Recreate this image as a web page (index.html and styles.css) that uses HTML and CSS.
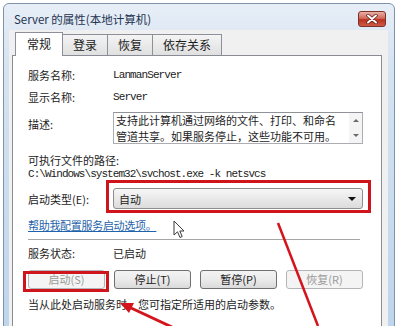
FILE: index.html
```html
<!DOCTYPE html>
<html lang="zh-CN">
  <head>
    <meta charset="UTF-8" />
    <title>Server 的属性(本地计算机)</title>
    <link rel="stylesheet" href="styles.css">
  </head>
  <body>
    <div class="window">
      <div class="titlebar">
        <span class="title">Server 的属性(本地计算机)</span>
        <div class="close">
          <svg width="14" height="10" viewBox="0 0 14 10">
            <path d="M3 1.5 L11 8.5 M11 1.5 L3 8.5" stroke="#5a1a12" stroke-width="3.4" stroke-linecap="round" />
            <path d="M3 1.5 L11 8.5 M11 1.5 L3 8.5" stroke="#fff" stroke-width="2" stroke-linecap="round" />
          </svg>
        </div>
      </div>
      <div class="client">
        <div class="tabs">
          <div class="tab active">常规</div>
          <div class="tab">登录</div>
          <div class="tab">恢复</div>
          <div class="tab">依存关系</div>
        </div>
        <div class="panel">
          <div class="row">
            <span class="label">服务名称:</span>
            <span class="mono">LanmanServer</span>
          </div>
          <div class="row">
            <span class="label">显示名称:</span>
            <span class="mono">Server</span>
          </div>
          <div class="row desc-row">
            <span class="label desc-label">描述:</span>
            <div class="desc-box">
              <div class="desc-text">
                <div>支持此计算机通过网络的文件、打印、和命名</div>
                <div>管道共享。如果服务停止，这些功能不可用。</div>
              </div>
              <div class="scroll">
                <span class="tri-up"></span>
                <span class="tri-down"></span>
              </div>
            </div>
          </div>
          <div class="line path-label">可执行文件的路径:</div>
          <div class="line mono path">C:\Windows\system32\svchost.exe -k netsvcs</div>
          <div class="row select-row">
            <span class="label">启动类型(E):</span>
            <div class="select">
              <span>自动</span>
              <span class="tri-down dark"></span>
            </div>
          </div>
          <div class="line link">帮助我配置服务启动选项。</div>
          <div class="sep"></div>
          <div class="line status">
            <span class="label">服务状态:</span>
            <span>已启动</span>
          </div>
          <div class="buttons">
            <div class="btn disabled">启动(S)</div>
            <div class="btn">停止(T)</div>
            <div class="btn">暂停(P)</div>
            <div class="btn disabled">恢复(R)</div>
          </div>
          <div class="line note">当从此处启动服务时，您可指定所适用的启动参数。</div>
        </div>
      </div>
    </div>

    <div class="mark mark-select"></div>
    <div class="mark mark-start"></div>

    <svg class="arrows" width="400" height="326" viewBox="0 0 400 326">
      <line x1="278" y1="223" x2="318" y2="326" stroke="#d4141c" stroke-width="2.5" />
      <line x1="130" y1="307.5" x2="172" y2="327" stroke="#d4141c" stroke-width="3" />
      <polygon points="120,303 134,303 129,313" fill="#d4141c" />
    </svg>

    <svg class="cursor" width="13" height="20" viewBox="0 0 13 20">
      <path d="M1 1 L1 15 L4.5 11.8 L7 17.5 L9.2 16.5 L6.8 11 L11 11 Z" fill="#fff" stroke="#3a3a3a" stroke-width="1" stroke-linejoin="round" />
    </svg>
  </body>
</html>
```

FILE: styles.css
```css
body {
  margin: 0;
  width: 400px;
  height: 326px;
  overflow: hidden;
  position: relative;
  background: #fff;
  font-family: "Noto Sans CJK SC", sans-serif;
  font-size: 11px;
  color: #1c1c1c;
}

.window {
  margin: 3px 0 0 3px;
  width: 390px;
  height: 340px;
  border: 1px solid #7f93ab;
  border-radius: 6px 6px 0 0;
  background: linear-gradient(#e7eef7, #d6e3f1 60px, #bdd4ec);
}

.titlebar {
  height: 26px;
  box-sizing: border-box;
  display: flex;
  align-items: flex-start;
  justify-content: space-between;
  padding: 7px 8px 0 10px;
}
.title {
  font-size: 11.5px;
  line-height: 16px;
  color: #1e3350;
}
.close {
  width: 26px;
  height: 14px;
  border: 1px solid #7a3328;
  border-radius: 3px;
  background: linear-gradient(#eab0a6, #d36a5a 45%, #b9321f 55%, #cf5a45);
  display: flex;
  align-items: center;
  justify-content: center;
}

.client {
  margin: 0 6px 0 5px;
  height: 310px;
  padding: 0 6px 0 3px;
  background: #f0f0f0;
}

.tabs {
  height: 25px;
  display: flex;
  align-items: flex-end;
  padding-left: 3px;
}
.tab {
  height: 20px;
  line-height: 20px;
  padding: 0 10px;
  margin-right: -1px;
  border: 1px solid #8e9099;
  border-bottom: none;
  background: linear-gradient(#f4f4f4, #e0e0e0);
  font-size: 12px;
}
.tab.active {
  height: 23px;
  line-height: 22px;
  padding: 0 11px;
  margin-bottom: -1px;
  background: #fff;
  position: relative;
  z-index: 1;
}

.panel {
  height: 300px;
  padding: 8px 0 0 15px;
  border: 1px solid #898c95;
  background: #fff;
}

.row {
  display: flex;
  align-items: center;
  height: 22px;
}
.label {
  width: 85px;
  flex: none;
}
.mono {
  font-family: "Liberation Mono", monospace;
  font-size: 11px;
  letter-spacing: -0.9px;
}
.line {
  height: 14px;
  line-height: 14px;
}

.desc-row {
  height: 32px;
  margin-top: 4px;
  align-items: flex-start;
}
.desc-label {
  padding-top: 5px;
  line-height: 14px;
}
.desc-box {
  width: 250px;
  height: 32px;
  box-sizing: border-box;
  border: 1px solid #abadb3;
  border-top-color: #8f9298;
  display: flex;
  overflow: hidden;
}
.desc-text {
  flex: 1;
  padding-left: 2px;
  line-height: 16px;
  margin-top: -1px;
}
.scroll {
  width: 13px;
  display: flex;
  flex-direction: column;
  align-items: center;
  justify-content: space-around;
  background: #f4f4f4;
}
.tri-up,
.tri-down {
  width: 0;
  height: 0;
  border-left: 3px solid transparent;
  border-right: 3px solid transparent;
}
.tri-up {
  border-bottom: 3px solid #6a6a6a;
}
.tri-down {
  border-top: 3px solid #6a6a6a;
}
.tri-down.dark {
  border-left-width: 4px;
  border-right-width: 4px;
  border-top: 4px solid #111;
}

.path-label {
  margin-top: 9px;
}
.path {
  letter-spacing: -0.95px;
}

.select-row {
  margin-top: 7px;
  height: 21px;
}
.select {
  width: 250px;
  height: 21px;
  box-sizing: border-box;
  border: 1px solid #8d8d8d;
  border-radius: 3px;
  background: linear-gradient(#f7f7f7, #e9e9e9 50%, #dcdcdc);
  display: flex;
  align-items: center;
  justify-content: space-between;
  padding: 0 6px 0 5px;
}

.link {
  margin-top: 9px;
  color: #1f63ab;
  text-decoration: underline;
  letter-spacing: -0.3px;
}

.sep {
  width: 332px;
  height: 1px;
  margin-top: 7px;
  background: #a6a6a6;
  border-bottom: 1px solid #fff;
}

.status {
  margin-top: 5px;
  display: flex;
}

.buttons {
  display: flex;
  gap: 9px;
  margin-top: 10px;
}
.btn {
  width: 77px;
  height: 19px;
  box-sizing: border-box;
  border: 1px solid #707070;
  border-radius: 3px;
  background: linear-gradient(#f3f3f3, #ebebeb 50%, #dadada);
  text-align: center;
  line-height: 17px;
}
.btn.disabled {
  border-color: #b3b6b9;
  background: #f4f4f4;
  color: #9a9a9a;
}

.note {
  margin-top: 8px;
}

.mark {
  position: absolute;
  box-sizing: border-box;
  border: 3px solid #d0141b;
}
.mark-select {
  left: 106px;
  top: 180px;
  width: 265px;
  height: 33px;
}
.mark-start {
  left: 23px;
  top: 271px;
  width: 86px;
  height: 21px;
}

.arrows {
  position: absolute;
  left: 0;
  top: 0;
}
.cursor {
  position: absolute;
  left: 173px;
  top: 220px;
}
```
